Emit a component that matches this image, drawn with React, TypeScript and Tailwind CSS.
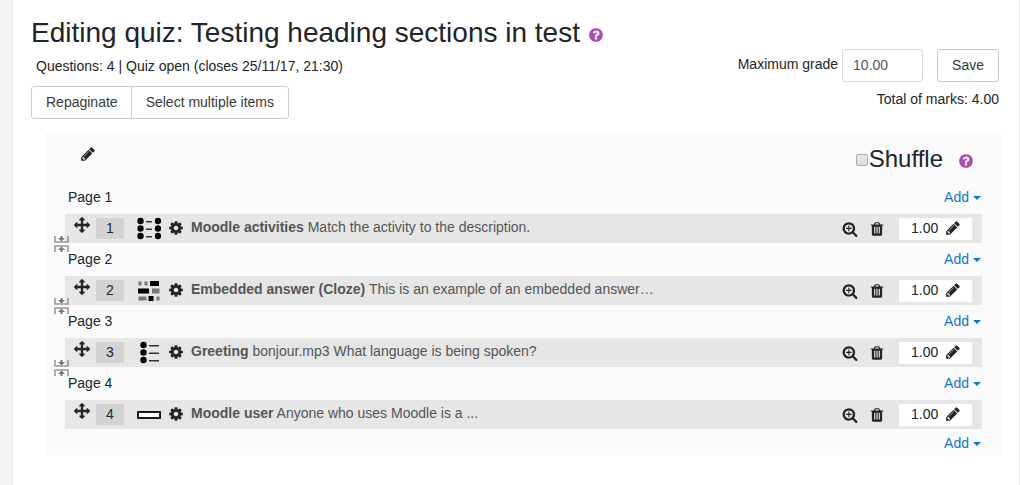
import type { ReactNode } from 'react'

const ICONS = {
  pencil:
    'M491 1536l91-91-235-235-91 91v107h128v128h107zm523-928q0-22-22-22-10 0-17 7l-542 542q-7 7-7 17 0 22 22 22 10 0 17-7l542-542q7-7 7-17zm-54-192l416 416-832 832h-416v-416zm683 96q0 53-37 90l-166 166-416-416 166-165q36-38 90-38 53 0 91 38l235 234q37 39 37 91z',
  cog: 'M1152 896q0-106-75-181t-181-75-181 75-75 181 75 181 181 75 181-75 75-181zm512-109v222q0 12-8 23t-20 13l-185 28q-19 54-39 91 35 50 107 138 10 12 10 25t-9 23q-27 37-99 108t-94 71q-12 0-26-9l-138-108q-44 23-91 38-16 136-29 186-7 28-36 28h-222q-14 0-24.5-8.5t-11.5-21.5l-28-184q-49-16-90-37l-141 107q-10 9-25 9-14 0-25-11-126-114-165-168-7-10-7-23 0-12 8-23 15-21 51-66.5t54-70.5q-27-50-41-99l-183-27q-13-2-21-12.5t-8-23.5v-222q0-12 8-23t19-13l186-28q14-46 39-92-40-57-107-138-10-12-10-24 0-10 9-23 26-36 98.5-107.5t94.5-71.5q13 0 26 10l138 107q44-23 91-38 16-136 29-186 7-28 36-28h222q14 0 24.5 8.5t11.5 21.5l28 184q49 16 90 37l142-107q9-9 24-9 13 0 25 10 129 119 165 170 7 8 7 22 0 12-8 23-15 21-51 66.5t-54 70.5q26 50 41 98l183 28q13 2 21 12.5t8 23.5z',
  trash:
    'M704 1376v-704q0-14-9-23t-23-9h-64q-14 0-23 9t-9 23v704q0 14 9 23t23 9h64q14 0 23-9t9-23zm256 0v-704q0-14-9-23t-23-9h-64q-14 0-23 9t-9 23v704q0 14 9 23t23 9h64q14 0 23-9t9-23zm256 0v-704q0-14-9-23t-23-9h-64q-14 0-23 9t-9 23v704q0 14 9 23t23 9h64q14 0 23-9t9-23zm-544-992h448l-48-117q-7-9-17-11h-317q-10 2-17 11zm928 32v64q0 14-9 23t-23 9h-96v948q0 83-47 143.5t-113 60.5h-832q-66 0-113-58.5t-47-141.5v-952h-96q-14 0-23-9t-9-23v-64q0-14 9-23t23-9h309l70-167q15-37 54-63t79-26h320q40 0 79 26t54 63l70 167h309q14 0 23 9t9 23z',
  zoom: 'M1088 800v64q0 13-9.5 22.5t-22.5 9.5h-224v224q0 13-9.5 22.5t-22.5 9.5h-64q-13 0-22.5-9.5t-9.5-22.5v-224h-224q-13 0-22.5-9.5t-9.5-22.5v-64q0-13 9.5-22.5t22.5-9.5h224v-224q0-13 9.5-22.5t22.5-9.5h64q13 0 22.5 9.5t9.5 22.5v224h224q13 0 22.5 9.5t9.5 22.5zm128 32q0-185-131.5-316.5t-316.5-131.5-316.5 131.5-131.5 316.5 131.5 316.5 316.5 131.5 316.5-131.5 131.5-316.5zm512 832q0 53-37.5 90.5t-90.5 37.5q-54 0-90-38l-343-342q-179 124-399 124-143 0-273.5-55.5t-225-150-150-225-55.5-273.5 55.5-273.5 150-225 225-150 273.5-55.5 273.5 55.5 225 150 150 225 55.5 273.5q0 220-124 399l343 343q37 37 37 90z',
  help: 'M1024 1376v-192q0-14-9-23t-23-9h-192q-14 0-23 9t-9 23v192q0 14 9 23t23 9h192q14 0 23-9t9-23zm256-672q0-88-55.5-163t-138.5-116-170-41q-243 0-371 213-15 24 8 42l132 100q7 6 19 6 16 0 25-12 53-68 86-92 34-24 86-24 48 0 85.5 26t37.5 59q0 38-20 61t-68 45q-63 28-115.5 86.5t-52.5 125.5v36q0 14 9 23t23 9h192q14 0 23-9t9-23q0-19 21.5-49.5t54.5-49.5q32-18 49-28.5t46-35 44.5-48 28-60.5 12.5-81zm384 192q0 209-103 385.5t-279.5 279.5-385.5 103-385.5-103-279.5-279.5-103-385.5 103-385.5 279.5-279.5 385.5-103 385.5 103 279.5 279.5 103 385.5z',
  move: 'M1792 896q0 26-19 45l-256 256q-19 19-45 19t-45-19-19-45v-128h-384v384h128q26 0 45 19t19 45-19 45l-256 256q-19 19-45 19t-45-19l-256-256q-19-19-19-45t19-45 45-19h128v-384h-384v128q0 26-19 45t-45 19-45-19l-256-256q-19-19-19-45t19-45l256-256q19-19 45-19t45 19 19 45v128h384v-384h-128q-26 0-45-19t-19-45 19-45l256-256q19-19 45-19t45 19l256 256q19 19 19 45t-19 45-45 19h-128v384h384v-128q0-26 19-45t45-19 45 19l256 256q19 19 19 45z',
}

function Icon({ name }: { name: keyof typeof ICONS }) {
  return (
    <svg viewBox="0 0 1792 1792" className="size-4 shrink-0 fill-current" aria-hidden="true">
      <path d={ICONS[name]} />
    </svg>
  )
}

function IconButton({ name, label, className = '' }: { name: keyof typeof ICONS; label: string; className?: string }) {
  return (
    <button type="button" aria-label={label} className={`shrink-0 cursor-pointer ${className}`}>
      <Icon name={name} />
    </button>
  )
}

type QuestionType = 'match' | 'cloze' | 'choice' | 'short'

const TYPE_DRAWINGS: Record<QuestionType, ReactNode> = {
  match: (
    <>
      {[4, 11.5, 19].map((y) => (
        <g key={y}>
          <circle cx="3.5" cy={y} r="3.2" />
          <circle cx="21" cy={y} r="3.2" />
          <path d={`M9 ${y}h6v1.5h-6z`} fill="#333" />
        </g>
      ))}
    </>
  ),
  cloze: (
    <>
      <path d="M13 2h9v5h-9zM1 9.500h11v5h-11zM11.500 17h5v5h-5z" />
      <path d="M1.500 2.500h3v4h-3zM7.500 2.500h3v4h-3zM15 9.500h7.500v5h-7.500zM1.500 17.500h8v4h-8zM19.500 17.500h3v4h-3z" fill="#777" />
    </>
  ),
  choice: (
    <>
      {[4, 11.5, 19].map((y) => (
        <g key={y}>
          <circle cx="6.5" cy={y} r="3.2" />
          <path d={`M12 ${y}h10v1.500h-10z`} fill="#333" />
        </g>
      ))}
    </>
  ),
  short: <rect x="1" y="9" width="22" height="6" fill="#fff" stroke="#000" strokeWidth="1.8" />,
}

interface Question {
  type: QuestionType
  name: string
  text: string
}

const questions: Question[] = [
  { type: 'match', name: 'Moodle activities', text: 'Match the activity to the description.' },
  { type: 'cloze', name: 'Embedded answer (Cloze)', text: 'This is an example of an embedded answer…' },
  { type: 'choice', name: 'Greeting', text: 'bonjour.mp3 What language is being spoken?' },
  { type: 'short', name: 'Moodle user', text: 'Anyone who uses Moodle is a ...' },
]

function AddMenu() {
  return (
    <button type="button" aria-haspopup="menu" className="flex cursor-pointer items-center gap-1 text-[#1177d1]">
      Add
      <span className="mt-0.5 border-x-4 border-t-4 border-x-transparent border-t-current" />
    </button>
  )
}

function PageBreakButton() {
  return (
    <button type="button" aria-label="Remove page break" className="absolute top-[22px] -left-[11px] cursor-pointer">
      <svg width="15" height="16" viewBox="0 0 15 16" aria-hidden="true">
        <path d="M1 0v6h13v-6M1 16v-6h13v6" fill="none" stroke="#999" strokeWidth="1.6" />
        <path d="M6.5 0h2v2h2.500l-3.500 3.500-3.500-3.500h2.500zM6.5 16h2v-2h2.500l-3.500-3.500-3.500 3.500h2.500z" fill="#777" />
      </svg>
    </button>
  )
}

function QuestionRow({ question, number, last }: { question: Question; number: number; last: boolean }) {
  return (
    <div className="relative flex h-[29px] items-center bg-[#e6e6e6] pr-2.5 pl-[9px]">
      <IconButton name="move" label={`Move question ${number}`} className="mb-2" />
      <span className="ml-1.5 h-[21px] w-7 shrink-0 bg-[#d3d3d3] text-center leading-[21px]">{number}</span>
      <svg viewBox="0 0 24 24" className="ml-[13px] size-6 shrink-0" aria-hidden="true">
        {TYPE_DRAWINGS[question.type]}
      </svg>
      <IconButton name="cog" label={`Edit ${question.name}`} className="mb-0.5 ml-[7px]" />
      <a href="#" className="mb-1 ml-[7px] min-w-0 flex-1 truncate text-[#555]">
        <b>{question.name}</b> {question.text}
      </a>
      <IconButton name="zoom" label={`Preview ${question.name}`} className="ml-4" />
      <IconButton name="trash" label={`Delete ${question.name}`} className="ml-[11px]" />
      <div className="ml-3.5 flex h-[22px] w-[73px] shrink-0 items-center bg-white pb-0.5 pl-3">
        <span>1.00</span>
        <IconButton name="pencil" label={`Edit mark for ${question.name}`} className="ml-[7px]" />
      </div>
      {!last && <PageBreakButton />}
    </div>
  )
}

export default function App() {
  return (
    <div className="flex min-h-screen bg-[#f3f3f3] font-['Liberation_Sans',Arial,sans-serif] text-sm text-[#212529] pl-3">
      <main className="min-w-0 flex-1 border-x border-[#e8e8e8] bg-white pt-4 pr-5 pb-[30px] pl-[18px]">
        <div className="flex h-[33px] items-center gap-2">
          <h1 className="text-[28px] leading-[33px]">Editing quiz: Testing heading sections in test</h1>
          <IconButton name="help" label="Help with editing quiz" className="mt-1 text-[#ac4bb4]" />
        </div>

        <div className="flex justify-between">
          <div>
            <p className="mt-[7px] pl-[5px]">Questions: 4 | Quiz open (closes 25/11/17, 21:30)</p>
            <div className="mt-2.5 flex">
              <button
                type="button"
                className="h-[33px] cursor-pointer rounded-l-[3px] border border-[#ccc] pr-[13px] pb-0.5 pl-3.5 text-[#373a3c]"
              >
                Repaginate
              </button>
              <button
                type="button"
                className="-ml-px h-[33px] cursor-pointer rounded-r-[3px] border border-[#ccc] px-3.5 pb-0.5 text-[#373a3c]"
              >
                Select multiple items
              </button>
            </div>
          </div>
          <div>
            <form className="flex items-center" onSubmit={(e) => e.preventDefault()}>
              <label htmlFor="maxgrade" className="mr-1 mb-1">
                Maximum grade
              </label>
              <input
                id="maxgrade"
                type="text"
                defaultValue="10.00"
                className="mr-3.5 h-[33px] w-[81px] rounded-[3px] border border-[#d9d9d9] px-2.5 pb-0.5 text-[#55595c]"
              />
              <button
                type="submit"
                className="h-[33px] cursor-pointer rounded-[3px] border border-[#ccc] px-3.5 pb-0.5 text-[#373a3c]"
              >
                Save
              </button>
            </form>
            <p className="mt-[7px] text-right">Total of marks: 4.00</p>
          </div>
        </div>

        <section className="mt-3.5 mr-[-3px] ml-3.5 bg-[#fafafa] px-5">
          <div className="flex h-12 items-center justify-between pr-2 pl-[15px]">
            <IconButton name="pencil" label="Edit section heading" className="mb-1.5" />
            <div className="mt-1 flex items-center">
              <input
                id="shuffle"
                type="checkbox"
                className="mt-0.5 mr-px size-3 appearance-none rounded-xs border border-[#aaa] bg-linear-to-b from-[#e8e8e8] to-[#ddd]"
              />
              <label htmlFor="shuffle" className="text-2xl">
                Shuffle
              </label>
              <IconButton name="help" label="Help with shuffle" className="mt-1 ml-[15px] text-[#ac4bb4]" />
            </div>
          </div>

          {questions.map((question, i) => (
            <div key={question.name}>
              <div className="flex h-[33px] items-center justify-between pr-px pb-0.5 pl-[3px]">
                <span>Page {i + 1}</span>
                <AddMenu />
              </div>
              <QuestionRow question={question} number={i + 1} last={i === questions.length - 1} />
            </div>
          ))}
          <div className="flex h-[26px] items-center justify-end pt-0.5 pr-px">
            <AddMenu />
          </div>
        </section>
      </main>
    </div>
  )
}
